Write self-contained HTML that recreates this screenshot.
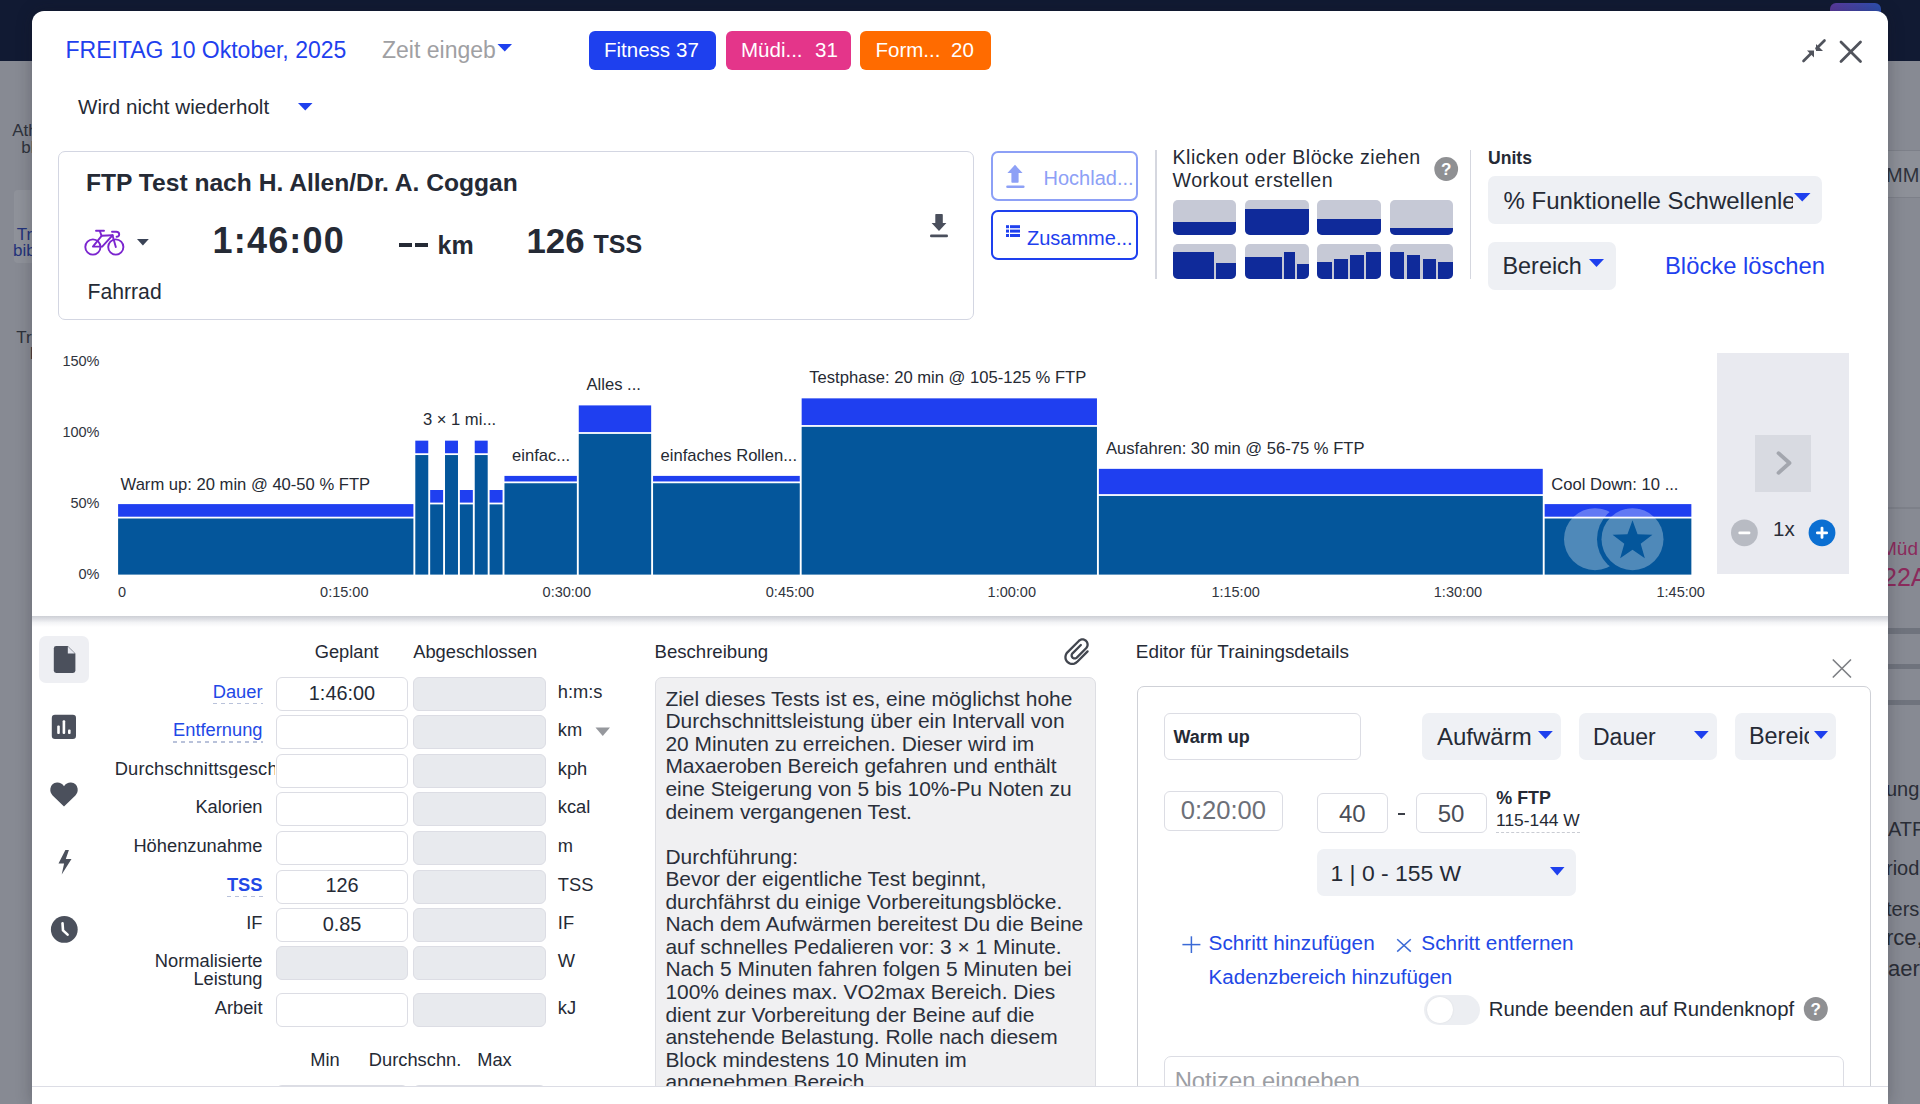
<!DOCTYPE html>
<html><head><meta charset="utf-8">
<style>
*{box-sizing:border-box;margin:0;padding:0}
html,body{width:1920px;height:1104px;overflow:hidden}
body{position:relative;background:#878a93;font-family:"Liberation Sans",sans-serif;color:#252a35}
.t{position:absolute;line-height:1;white-space:nowrap}
.r{position:absolute}
svg{position:absolute;overflow:visible}
</style></head><body>
<div class="r" style="left:0.0px;top:0.0px;width:1920.0px;height:61.0px;background:#111a33"></div><div class="r" style="left:1830.0px;top:3.0px;width:51.0px;height:17.0px;background:linear-gradient(90deg,#5b3a9e,#2c4fb0);border-radius:6px"></div><div class="t" style="left:12.2px;top:122.3px;font-size:17px;color:#2e323b;">Athlete</div><div class="t" style="left:21.2px;top:138.6px;font-size:17px;color:#2e323b;">bl</div><div class="r" style="left:13.6px;top:189.7px;width:46.4px;height:73.3px;background:#8f929a;border-radius:4px"></div><div class="t" style="left:16.8px;top:225.6px;font-size:17px;color:#23337a;">Tr</div><div class="t" style="left:13.0px;top:241.6px;font-size:17px;color:#23337a;">bib</div><div class="t" style="left:16.3px;top:328.6px;font-size:17px;color:#2e323b;">Tr</div><div class="t" style="left:30.0px;top:345.1px;font-size:17px;color:#2e323b;">l</div><div class="r" style="left:1870.0px;top:150.0px;width:50.0px;height:48.0px;background:#8d9098;border-top:1px solid #7d8089;border-bottom:1px solid #7d8089"></div><div class="t" style="left:1886.0px;top:165.1px;font-size:20px;color:#2e323b;">MMM</div><div class="r" style="left:1870.0px;top:507.0px;width:50.0px;height:1.5px;background:#7d8089"></div><div class="t" style="left:1881.0px;top:538.9px;font-size:19px;color:#8b2a5c;">Müd</div><div class="t" style="left:1883.0px;top:564.8px;font-size:25px;color:#8b2a5c;">22A</div><div class="r" style="left:1870.0px;top:628.0px;width:50.0px;height:6.0px;background:#6f737d"></div><div class="r" style="left:1870.0px;top:664.0px;width:50.0px;height:5.0px;background:#6f737d"></div><div class="r" style="left:1870.0px;top:700.0px;width:50.0px;height:5.0px;background:#6f737d"></div><div class="t" style="left:1886.0px;top:779.1px;font-size:20px;color:#2a2d36;">ung</div><div class="t" style="left:1888.0px;top:819.1px;font-size:20px;color:#2a2d36;">ATP</div><div class="t" style="left:1886.0px;top:858.1px;font-size:20px;color:#2a2d36;">riod</div><div class="t" style="left:1886.0px;top:899.1px;font-size:20px;color:#2a2d36;">ters</div><div class="t" style="left:1886.0px;top:927.4px;font-size:22px;color:#2a2d36;">rce,</div><div class="t" style="left:1888.0px;top:958.4px;font-size:22px;color:#2a2d36;">aer</div><div class="r" style="left:32.0px;top:11.0px;width:1856.0px;height:1093.0px;background:#fff;border-radius:12px 12px 0 0;box-shadow:0 0 16px rgba(20,22,30,0.28)"></div><div class="t" style="left:65.5px;top:38.5px;font-size:23px;color:#1e40ee;">FREITAG 10 Oktober, 2025</div><div class="t" style="left:382.0px;top:38.8px;font-size:23px;color:#9fa0a3;">Zeit eingeb</div><svg style="left:497px;top:44px" width="16" height="8"><path d="M0.5 0 L15 0 L7.75 7.6 Z" fill="#1e40ee"/></svg><div class="r" style="left:588.5px;top:31.0px;width:127.0px;height:39.0px;background:#1e40ee;border-radius:6px"></div><div class="t" style="left:604.0px;top:40.1px;font-size:20.5px;color:#fff;">Fitness</div><div class="t" style="left:676.0px;top:40.1px;font-size:20.5px;color:#fff;">37</div><div class="r" style="left:725.5px;top:31.0px;width:125.0px;height:39.0px;background:#e4358a;border-radius:6px"></div><div class="t" style="left:741.0px;top:40.1px;font-size:20.5px;color:#fff;">Müdi...</div><div class="t" style="left:815.0px;top:40.1px;font-size:20.5px;color:#fff;">31</div><div class="r" style="left:860.0px;top:31.0px;width:130.5px;height:39.0px;background:#ff6b00;border-radius:6px"></div><div class="t" style="left:875.5px;top:40.1px;font-size:20.5px;color:#fff;">Form...</div><div class="t" style="left:951.0px;top:40.1px;font-size:20.5px;color:#fff;">20</div><svg style="left:1800px;top:38px" width="28" height="26"><g stroke="#50535c" stroke-width="2.6" stroke-linecap="round" fill="none"><path d="M3.5 23 L11.5 15"/><path d="M24.5 2.5 L16.5 10.5"/></g><path d="M7 12.5 L14 12.5 L14 19.5 Z" fill="#50535c"/><path d="M14.5 6 L14.5 13 L21.5 13 Z" fill="#50535c" transform="translate(1.5 0)"/></svg><svg style="left:1838px;top:39px" width="26" height="26"><g stroke="#50535c" stroke-width="2.8" stroke-linecap="round"><path d="M3 3 L22.5 22.5"/><path d="M22.5 3 L3 22.5"/></g></svg><div class="t" style="left:78.0px;top:97.0px;font-size:20.6px;color:#252a35;">Wird nicht wiederholt</div><svg style="left:298px;top:103px" width="15" height="8"><path d="M0 0 L14.5 0 L7.25 7.5 Z" fill="#1e40ee"/></svg><div class="r" style="left:58.2px;top:151.0px;width:915.8px;height:169.0px;border:1.8px solid #d3d6e2;border-radius:7px;background:#fff"></div><div class="t" style="left:86.0px;top:171.2px;font-size:24.6px;color:#252a35;font-weight:700;">FTP Test nach H. Allen/Dr. A. Coggan</div><svg style="left:84px;top:229px" width="42" height="28" viewBox="0 0 42 28"><g fill="none" stroke="#7b25cf" stroke-width="1.9" stroke-linecap="round" stroke-linejoin="round"><circle cx="8.9" cy="18" r="7.6"/><circle cx="31.8" cy="18" r="7.6"/><path d="M12 1.8 L20 1.8"/><path d="M15.8 2 L17.6 6.8 L28.5 6.3"/><path d="M17.6 6.8 L8.9 17.6 L18.2 17.6 L28.5 6.3"/><path d="M28.5 6.3 L31.8 18"/><path d="M28 2.7 L32.3 2.7 Q35.2 2.7 35.2 5.3 Q35.2 7.8 32.6 7.8"/></g></svg><svg style="left:137px;top:239px" width="12" height="7"><path d="M0 0 L11.8 0 L5.9 6.6 Z" fill="#3a4356"/></svg><div class="t" style="left:212.5px;top:223.3px;font-size:36px;color:#252a35;font-weight:700;letter-spacing:1.2px">1:46:00</div><div class="r" style="left:399.0px;top:243.0px;width:12.5px;height:3.6px;background:#252a35"></div><div class="r" style="left:415.0px;top:243.0px;width:12.5px;height:3.6px;background:#252a35"></div><div class="t" style="left:437.5px;top:232.6px;font-size:25px;color:#252a35;font-weight:700;">km</div><div class="t" style="left:526.5px;top:223.9px;font-size:34.8px;color:#252a35;font-weight:700;">126</div><div class="t" style="left:593.5px;top:232.2px;font-size:25px;color:#252a35;font-weight:700;">TSS</div><div class="t" style="left:87.5px;top:281.3px;font-size:21.2px;color:#252a35;">Fahrrad</div><svg style="left:928px;top:212px" width="22" height="28"><path d="M7.3 2.5 Q7.3 2 8 2 L14 2 Q14.8 2 14.8 2.7 L14.8 11 L18.4 11 L11 18.9 L3.6 11 L7.3 11 Z" fill="#4a4f5c"/><rect x="2" y="22.6" width="18" height="2.6" rx="1.3" fill="#4a4f5c"/></svg><div class="r" style="left:991.0px;top:150.5px;width:147.0px;height:50.5px;border:2px solid #8da0f6;border-radius:7px"></div><svg style="left:1004px;top:163px" width="22" height="27"><path d="M11 1.8 L18.6 10 L14.6 10 L14.6 19 Q14.6 19.7 13.9 19.7 L8.1 19.7 Q7.4 19.7 7.4 19 L7.4 10 L3.4 10 Z" fill="#8da0f6"/><rect x="2.2" y="22.4" width="18.4" height="2.6" rx="1.3" fill="#8da0f6"/></svg><div class="t" style="left:1043.5px;top:168.3px;font-size:20px;color:#8da0f6;">Hochlad...</div><div class="r" style="left:991.0px;top:210.3px;width:147.0px;height:50.2px;border:2px solid #1e40ee;border-radius:7px"></div><svg style="left:1005px;top:224px" width="16" height="14"><g fill="#1e40ee"><rect x="1" y="1.2" width="3" height="3"/><rect x="5" y="1.2" width="10" height="3"/><rect x="1" y="5.6" width="3" height="3"/><rect x="5" y="5.6" width="10" height="3"/><rect x="1" y="10" width="3" height="3"/><rect x="5" y="10" width="10" height="3"/></g></svg><div class="t" style="left:1027.0px;top:227.8px;font-size:20px;color:#1e40ee;">Zusamme...</div><div class="r" style="left:1155.0px;top:150.0px;width:1.5px;height:129.0px;background:#d5d7df"></div><div class="r" style="left:1469.5px;top:150.0px;width:1.5px;height:129.0px;background:#d5d7df"></div><div class="t" style="left:1172.5px;top:147.9px;font-size:19.6px;color:#252a35;letter-spacing:0.5px">Klicken oder Blöcke ziehen</div><div class="t" style="left:1172.5px;top:170.9px;font-size:19.6px;color:#252a35;letter-spacing:0.5px">Workout erstellen</div><svg style="left:1434px;top:157px" width="25" height="25"><circle cx="12.2" cy="12" r="11.9" fill="#8f9093"/><text x="12.2" y="18.2" text-anchor="middle" font-family="Liberation Sans" font-weight="700" font-size="17" fill="#fff">?</text></svg><div class="r" style="left:1172.5px;top:200.3px;width:63.8px;height:34.5px;background:#c6c9d6;border-radius:5px;overflow:hidden"><div class="r" style="left:0.0px;width:63.8px;top:21.7px;bottom:0;background:#0f2a9a"></div></div><div class="r" style="left:1245px;top:200.3px;width:63.8px;height:34.5px;background:#c6c9d6;border-radius:5px;overflow:hidden"><div class="r" style="left:0.0px;width:63.8px;top:8.9px;bottom:0;background:#0f2a9a"></div></div><div class="r" style="left:1317.3px;top:200.3px;width:63.8px;height:34.5px;background:#c6c9d6;border-radius:5px;overflow:hidden"><div class="r" style="left:0.0px;width:63.8px;top:18.6px;bottom:0;background:#0f2a9a"></div></div><div class="r" style="left:1389.7px;top:200.3px;width:63.8px;height:34.5px;background:#c6c9d6;border-radius:5px;overflow:hidden"><div class="r" style="left:0.0px;width:63.8px;top:27.4px;bottom:0;background:#0f2a9a"></div></div><div class="r" style="left:1172.5px;top:244px;width:63.8px;height:34.5px;background:#c6c9d6;border-radius:5px;overflow:hidden"><div class="r" style="left:0.0px;width:41.5px;top:8.2px;bottom:0;background:#0f2a9a"></div><div class="r" style="left:43.5px;width:20.3px;top:19.3px;bottom:0;background:#0f2a9a"></div></div><div class="r" style="left:1245px;top:244px;width:63.8px;height:34.5px;background:#c6c9d6;border-radius:5px;overflow:hidden"><div class="r" style="left:0.0px;width:37.2px;top:13.0px;bottom:0;background:#0f2a9a"></div><div class="r" style="left:39.3px;width:11.0px;top:8.2px;bottom:0;background:#0f2a9a"></div><div class="r" style="left:52.2px;width:11.6px;top:20.0px;bottom:0;background:#0f2a9a"></div></div><div class="r" style="left:1317.3px;top:244px;width:63.8px;height:34.5px;background:#c6c9d6;border-radius:5px;overflow:hidden"><div class="r" style="left:0.0px;width:14.8px;top:18.0px;bottom:0;background:#0f2a9a"></div><div class="r" style="left:17.0px;width:13.7px;top:14.7px;bottom:0;background:#0f2a9a"></div><div class="r" style="left:32.9px;width:13.8px;top:11.4px;bottom:0;background:#0f2a9a"></div><div class="r" style="left:48.8px;width:15.0px;top:8.2px;bottom:0;background:#0f2a9a"></div></div><div class="r" style="left:1389.7px;top:244px;width:63.8px;height:34.5px;background:#c6c9d6;border-radius:5px;overflow:hidden"><div class="r" style="left:0.0px;width:14.8px;top:8.2px;bottom:0;background:#0f2a9a"></div><div class="r" style="left:17.0px;width:13.7px;top:11.4px;bottom:0;background:#0f2a9a"></div><div class="r" style="left:32.9px;width:13.8px;top:14.7px;bottom:0;background:#0f2a9a"></div><div class="r" style="left:48.8px;width:15.0px;top:18.0px;bottom:0;background:#0f2a9a"></div></div><div class="t" style="left:1488.0px;top:149.8px;font-size:17.6px;color:#252a35;font-weight:700;">Units</div><div class="r" style="left:1488.0px;top:176.0px;width:334.0px;height:48.0px;background:#eef0f4;border-radius:7px"></div><div class="t" style="left:1503.5px;top:187px;width:289px;overflow:hidden;font-size:24px;color:#252a35;line-height:1.2">% Funktionelle Schwellenleistung</div><svg style="left:1794px;top:193px" width="17" height="9"><path d="M0 0 L16.5 0 L8.25 8.6 Z" fill="#1e40ee"/></svg><div class="r" style="left:1488.0px;top:242.0px;width:128.0px;height:48.0px;background:#eef0f4;border-radius:7px"></div><div class="t" style="left:1502.5px;top:254.7px;font-size:23.4px;color:#252a35;">Bereich</div><svg style="left:1589px;top:259px" width="16" height="9"><path d="M0 0 L15 0 L7.5 8 Z" fill="#1e40ee"/></svg><div class="t" style="left:1665.0px;top:254.3px;font-size:23.8px;color:#1e40ee;">Blöcke löschen</div><svg style="left:0;top:0" width="1920" height="1104"><rect x="118.10" y="518.50" width="295.30" height="56.10" fill="#04569b"/><rect x="118.10" y="504.10" width="295.30" height="12.60" fill="#1f3ff0"/><rect x="415.30" y="455.05" width="12.96" height="119.55" fill="#04569b"/><rect x="415.30" y="440.65" width="12.96" height="12.60" fill="#1f3ff0"/><rect x="430.16" y="504.40" width="12.96" height="70.20" fill="#04569b"/><rect x="430.16" y="490.00" width="12.96" height="12.60" fill="#1f3ff0"/><rect x="445.02" y="455.05" width="12.96" height="119.55" fill="#04569b"/><rect x="445.02" y="440.65" width="12.96" height="12.60" fill="#1f3ff0"/><rect x="459.88" y="504.40" width="12.96" height="70.20" fill="#04569b"/><rect x="459.88" y="490.00" width="12.96" height="12.60" fill="#1f3ff0"/><rect x="474.74" y="455.05" width="12.96" height="119.55" fill="#04569b"/><rect x="474.74" y="440.65" width="12.96" height="12.60" fill="#1f3ff0"/><rect x="489.60" y="504.40" width="12.96" height="70.20" fill="#04569b"/><rect x="489.60" y="490.00" width="12.96" height="12.60" fill="#1f3ff0"/><rect x="504.46" y="483.25" width="72.40" height="91.35" fill="#04569b"/><rect x="504.46" y="475.90" width="72.40" height="5.55" fill="#1f3ff0"/><rect x="578.76" y="433.90" width="72.40" height="140.70" fill="#04569b"/><rect x="578.76" y="405.40" width="72.40" height="26.70" fill="#1f3ff0"/><rect x="653.06" y="483.25" width="146.70" height="91.35" fill="#04569b"/><rect x="653.06" y="475.90" width="146.70" height="5.55" fill="#1f3ff0"/><rect x="801.66" y="426.85" width="295.30" height="147.75" fill="#04569b"/><rect x="801.66" y="398.35" width="295.30" height="26.70" fill="#1f3ff0"/><rect x="1098.86" y="495.94" width="443.90" height="78.66" fill="#04569b"/><rect x="1098.86" y="468.85" width="443.90" height="25.29" fill="#1f3ff0"/><rect x="1544.66" y="518.50" width="146.70" height="56.10" fill="#04569b"/><rect x="1544.66" y="504.10" width="146.70" height="12.60" fill="#1f3ff0"/><defs><mask id="m1"><rect x="1500" y="450" width="250" height="150" fill="#fff"/><circle cx="1632.5" cy="539.2" r="35.5" fill="#000"/></mask><mask id="m2"><rect x="1500" y="450" width="250" height="150" fill="#fff"/><polygon points="1632.50,520.20 1637.55,534.24 1652.47,534.71 1640.68,543.86 1644.84,558.19 1632.50,549.80 1620.16,558.19 1624.32,543.86 1612.53,534.71 1627.45,534.24" fill="#000"/></mask><clipPath id="c1"><rect x="1544.2" y="500" width="146.6" height="74.2"/></clipPath></defs><g clip-path="url(#c1)" fill="#fff" fill-opacity="0.3"><circle cx="1595" cy="539.2" r="31" mask="url(#m1)"/><circle cx="1632.5" cy="539.2" r="31" mask="url(#m2)"/></g></svg><div class="t" style="right:1820.5px;top:353.6px;font-size:14.5px;color:#30343d;text-align:right;">150%</div><div class="t" style="right:1820.5px;top:424.6px;font-size:14.5px;color:#30343d;text-align:right;">100%</div><div class="t" style="right:1820.5px;top:495.7px;font-size:14.5px;color:#30343d;text-align:right;">50%</div><div class="t" style="right:1820.5px;top:566.7px;font-size:14.5px;color:#30343d;text-align:right;">0%</div><div class="t" style="left:118.0px;top:584.7px;font-size:14.5px;color:#30343d;">0</div><div class="t" style="left:44.3px;width:600px;top:584.7px;font-size:14.5px;color:#30343d;text-align:center;">0:15:00</div><div class="t" style="left:266.8px;width:600px;top:584.7px;font-size:14.5px;color:#30343d;text-align:center;">0:30:00</div><div class="t" style="left:490.0px;width:600px;top:584.7px;font-size:14.5px;color:#30343d;text-align:center;">0:45:00</div><div class="t" style="left:711.8px;width:600px;top:584.7px;font-size:14.5px;color:#30343d;text-align:center;">1:00:00</div><div class="t" style="left:935.6px;width:600px;top:584.7px;font-size:14.5px;color:#30343d;text-align:center;">1:15:00</div><div class="t" style="left:1158.0px;width:600px;top:584.7px;font-size:14.5px;color:#30343d;text-align:center;">1:30:00</div><div class="t" style="left:1380.7px;width:600px;top:584.7px;font-size:14.5px;color:#30343d;text-align:center;">1:45:00</div><div class="t" style="left:120.6px;top:476.8px;font-size:16.6px;color:#262a33;">Warm up: 20 min @ 40-50 % FTP</div><div class="t" style="left:422.9px;top:412.1px;font-size:16.6px;color:#262a33;">3 × 1 mi...</div><div class="t" style="left:512.0px;top:447.9px;font-size:16.6px;color:#262a33;">einfac...</div><div class="t" style="left:586.5px;top:376.9px;font-size:16.6px;color:#262a33;">Alles ...</div><div class="t" style="left:660.5px;top:447.9px;font-size:16.6px;color:#262a33;">einfaches Rollen...</div><div class="t" style="left:809.3px;top:370.1px;font-size:16.6px;color:#262a33;">Testphase: 20 min @ 105-125 % FTP</div><div class="t" style="left:1106.0px;top:440.7px;font-size:16.6px;color:#262a33;">Ausfahren: 30 min @ 56-75 % FTP</div><div class="t" style="left:1551.2px;top:476.9px;font-size:16.6px;color:#262a33;">Cool Down: 10 ...</div><div class="r" style="left:1717.4px;top:352.7px;width:132.1px;height:221.5px;background:#e9eaf0"></div><div class="r" style="left:1755.4px;top:435.4px;width:56.1px;height:56.5px;background:#d8dae1"></div><svg style="left:1772px;top:450px" width="24" height="28"><path d="M6.5 3.2 L17.5 13 L6.5 22.8" fill="none" stroke="#a3a6ae" stroke-width="3.8" stroke-linecap="round" stroke-linejoin="round"/></svg><svg style="left:1730px;top:519px" width="28" height="28"><circle cx="14.4" cy="13.8" r="13.4" fill="#b8bbc3"/><rect x="8.4" y="12.4" width="12" height="2.8" rx="1.2" fill="#fff"/></svg><div class="t" style="left:1773.0px;top:518.6px;font-size:20.5px;color:#2a2e38;">1x</div><svg style="left:1808px;top:519px" width="28" height="28"><circle cx="14" cy="13.8" r="13.4" fill="#0b6fd2"/><rect x="8" y="12.4" width="12" height="2.8" rx="1.2" fill="#fff"/><rect x="12.6" y="7.8" width="2.8" height="12" rx="1.2" fill="#fff"/></svg><div class="r" style="left:32.0px;top:615.5px;width:1856.0px;height:11.5px;background:linear-gradient(#cdcfd5,#dfe0e5 30%,#f3f4f6 60%,#fff)"></div><div class="r" style="left:39.4px;top:635.9px;width:49.6px;height:47.3px;background:#eeeff3;border-radius:7px"></div><svg style="left:52px;top:644px" width="26" height="32"><path d="M4.2 2 L15.8 2 L23.4 9.6 L23.4 26.6 Q23.4 29 21 29 L4.2 29 Q1.8 29 1.8 26.6 L1.8 4.4 Q1.8 2 4.2 2 Z" fill="#4b505c"/><path d="M15.8 2.5 L15.8 9.6 L22.9 9.6 Z" fill="#e6e8f0"/></svg><svg style="left:51px;top:714px" width="26" height="26"><rect x="0.8" y="0.8" width="24.2" height="24.2" rx="3.2" fill="#4b505c"/><rect x="6.2" y="11.5" width="2.6" height="8.6" rx="1" fill="#fff"/><rect x="11.6" y="6.2" width="2.6" height="13.9" rx="1" fill="#fff"/><rect x="17" y="15.5" width="2.6" height="4.6" rx="1" fill="#fff"/></svg><svg style="left:49px;top:781px" width="30" height="27"><path d="M15 25.6 L3.6 14.4 Q0.8 11.6 1.4 7.6 Q2.4 2 8 1.6 Q12.4 1.4 15 5.2 Q17.6 1.4 22 1.6 Q27.6 2 28.6 7.6 Q29.2 11.6 26.4 14.4 Z" fill="#4b505c"/></svg><svg style="left:56px;top:849px" width="17" height="27"><path d="M8.9 1 L2 14.6 L7.6 14.6 L5.2 25.6 L15 10 L9.3 10 L12.4 1 Z" fill="#4b505c" transform="translate(0.5 0)"/></svg><svg style="left:50px;top:915px" width="29" height="29"><circle cx="14.3" cy="14.4" r="13.4" fill="#4b505c"/><path d="M12.5 8.2 L13 15.4 L17.6 19.6" stroke="#fff" stroke-width="2.6" stroke-linecap="round" stroke-linejoin="round" fill="none"/></svg><div class="t" style="left:46.7px;width:600px;top:643.1px;font-size:18.3px;color:#252a35;text-align:center;">Geplant</div><div class="t" style="left:175.2px;width:600px;top:643.1px;font-size:18.3px;color:#252a35;text-align:center;">Abgeschlossen</div><div class="r" style="left:275.8px;top:676.7px;width:132.7px;height:34.0px;border:1.6px solid #dcdde4;border-radius:6px;background:#fff"></div><div class="r" style="left:412.7px;top:676.7px;width:133.6px;height:34.0px;border:1.6px solid #dcdde4;border-radius:6px;background:#e8eaee"></div><div class="t" style="right:1657.5px;top:682.6px;font-size:18.3px;color:#2248e6;text-align:right;background:linear-gradient(90deg,#b9c2da 55%,transparent 55%) 0 100%/8px 1.8px repeat-x;padding-bottom:3.5px;line-height:1">Dauer</div><div class="t" style="left:557.8px;top:682.6px;font-size:18.3px;color:#252a35;">h:m:s</div><div class="t" style="left:42.0px;width:600px;top:683.5px;font-size:19.9px;color:#252a35;text-align:center;">1:46:00</div><div class="r" style="left:275.8px;top:715.2px;width:132.7px;height:34.0px;border:1.6px solid #dcdde4;border-radius:6px;background:#fff"></div><div class="r" style="left:412.7px;top:715.2px;width:133.6px;height:34.0px;border:1.6px solid #dcdde4;border-radius:6px;background:#e8eaee"></div><div class="t" style="right:1657.5px;top:721.1px;font-size:18.3px;color:#2248e6;text-align:right;background:linear-gradient(90deg,#b9c2da 55%,transparent 55%) 0 100%/8px 1.8px repeat-x;padding-bottom:3.5px;line-height:1">Entfernung</div><div class="t" style="left:557.8px;top:721.1px;font-size:18.3px;color:#252a35;">km</div><div class="r" style="left:275.8px;top:753.8px;width:132.7px;height:34.0px;border:1.6px solid #dcdde4;border-radius:6px;background:#fff"></div><div class="r" style="left:412.7px;top:753.8px;width:133.6px;height:34.0px;border:1.6px solid #dcdde4;border-radius:6px;background:#e8eaee"></div><div class="t" style="left:114.7px;top:759.7px;width:160.5px;overflow:hidden;font-size:18.3px;letter-spacing:0.2px;color:#252a35">Durchschnittsgeschwindigkeit</div><div class="t" style="left:557.8px;top:759.7px;font-size:18.3px;color:#252a35;">kph</div><div class="r" style="left:275.8px;top:792.4px;width:132.7px;height:34.0px;border:1.6px solid #dcdde4;border-radius:6px;background:#fff"></div><div class="r" style="left:412.7px;top:792.4px;width:133.6px;height:34.0px;border:1.6px solid #dcdde4;border-radius:6px;background:#e8eaee"></div><div class="t" style="right:1657.5px;top:798.3px;font-size:18.3px;color:#252a35;text-align:right;">Kalorien</div><div class="t" style="left:557.8px;top:798.3px;font-size:18.3px;color:#252a35;">kcal</div><div class="r" style="left:275.8px;top:831.0px;width:132.7px;height:34.0px;border:1.6px solid #dcdde4;border-radius:6px;background:#fff"></div><div class="r" style="left:412.7px;top:831.0px;width:133.6px;height:34.0px;border:1.6px solid #dcdde4;border-radius:6px;background:#e8eaee"></div><div class="t" style="right:1657.5px;top:836.9px;font-size:18.3px;color:#252a35;text-align:right;">Höhenzunahme</div><div class="t" style="left:557.8px;top:836.9px;font-size:18.3px;color:#252a35;">m</div><div class="r" style="left:275.8px;top:869.6px;width:132.7px;height:34.0px;border:1.6px solid #dcdde4;border-radius:6px;background:#fff"></div><div class="r" style="left:412.7px;top:869.6px;width:133.6px;height:34.0px;border:1.6px solid #dcdde4;border-radius:6px;background:#e8eaee"></div><div class="t" style="right:1657.5px;top:875.5px;font-size:18.3px;color:#2248e6;font-weight:700;text-align:right;background:linear-gradient(90deg,#b9c2da 55%,transparent 55%) 0 100%/8px 1.8px repeat-x;padding-bottom:3.5px;line-height:1">TSS</div><div class="t" style="left:557.8px;top:875.5px;font-size:18.3px;color:#252a35;">TSS</div><div class="t" style="left:42.0px;width:600px;top:876.4px;font-size:19.9px;color:#252a35;text-align:center;">126</div><div class="r" style="left:275.8px;top:908.0px;width:132.7px;height:34.0px;border:1.6px solid #dcdde4;border-radius:6px;background:#fff"></div><div class="r" style="left:412.7px;top:908.0px;width:133.6px;height:34.0px;border:1.6px solid #dcdde4;border-radius:6px;background:#e8eaee"></div><div class="t" style="right:1657.5px;top:913.9px;font-size:18.3px;color:#252a35;text-align:right;">IF</div><div class="t" style="left:557.8px;top:913.9px;font-size:18.3px;color:#252a35;">IF</div><div class="t" style="left:42.0px;width:600px;top:914.8px;font-size:19.9px;color:#252a35;text-align:center;">0.85</div><div class="r" style="left:275.8px;top:946.4px;width:132.7px;height:34.0px;border:1.6px solid #dcdde4;border-radius:6px;background:#e8eaee"></div><div class="r" style="left:412.7px;top:946.4px;width:133.6px;height:34.0px;border:1.6px solid #dcdde4;border-radius:6px;background:#e8eaee"></div><div class="t" style="right:1657.5px;top:952.3px;font-size:18.3px;color:#252a35;text-align:right;">Normalisierte</div><div class="t" style="right:1657.5px;top:970.3px;font-size:18.3px;color:#252a35;text-align:right;">Leistung</div><div class="t" style="left:557.8px;top:952.3px;font-size:18.3px;color:#252a35;">W</div><div class="r" style="left:275.8px;top:993.4px;width:132.7px;height:34.0px;border:1.6px solid #dcdde4;border-radius:6px;background:#fff"></div><div class="r" style="left:412.7px;top:993.4px;width:133.6px;height:34.0px;border:1.6px solid #dcdde4;border-radius:6px;background:#e8eaee"></div><div class="t" style="right:1657.5px;top:999.3px;font-size:18.3px;color:#252a35;text-align:right;">Arbeit</div><div class="t" style="left:557.8px;top:999.3px;font-size:18.3px;color:#252a35;">kJ</div><svg style="left:595px;top:726.5px" width="16" height="10"><path d="M0.5 0.5 L15 0.5 L7.75 9 Z" fill="#96989d"/></svg><div class="t" style="left:24.9px;width:600px;top:1051.3px;font-size:18.3px;color:#252a35;text-align:center;">Min</div><div class="t" style="left:115.1px;width:600px;top:1051.3px;font-size:18.3px;color:#252a35;text-align:center;">Durchschn.</div><div class="t" style="left:194.5px;width:600px;top:1051.3px;font-size:18.3px;color:#252a35;text-align:center;">Max</div><div class="r" style="left:275.8px;top:1085.0px;width:132.7px;height:19.0px;border:1.6px solid #dcdde4;border-radius:6px"></div><div class="r" style="left:412.7px;top:1085.0px;width:133.6px;height:19.0px;border:1.6px solid #dcdde4;border-radius:6px"></div><div class="t" style="left:654.5px;top:642.9px;font-size:18.6px;color:#252a35;">Beschreibung</div><svg style="left:0;top:0" width="1920" height="1104"><path d="M1087.58 651.41 L1077.04 661.95 L1075.85 662.90 L1074.48 663.56 L1072.99 663.90 L1071.47 663.90 L1069.99 663.56 L1068.61 662.90 L1067.42 661.95 L1066.47 660.76 L1065.81 659.39 L1065.48 657.90 L1065.48 656.38 L1065.81 654.90 L1066.47 653.52 L1067.42 652.33 L1078.81 640.95 L1079.71 640.23 L1080.75 639.73 L1081.87 639.47 L1083.03 639.47 L1084.15 639.73 L1085.19 640.23 L1086.09 640.95 L1086.81 641.85 L1087.31 642.89 L1087.57 644.01 L1087.57 645.17 L1087.31 646.29 L1086.81 647.33 L1086.09 648.23 L1076.76 657.57 L1076.23 657.98 L1075.63 658.28 L1074.97 658.43 L1074.30 658.43 L1073.65 658.28 L1073.04 657.98 L1072.52 657.57 L1072.10 657.04 L1071.80 656.43 L1071.66 655.78 L1071.66 655.11 L1071.80 654.45 L1072.10 653.85 L1072.52 653.32 L1080.86 644.98" fill="none" stroke="#42464f" stroke-width="2.3" stroke-linecap="round" stroke-linejoin="round"/></svg><div class="r" style="left:655.3px;top:677px;width:441px;height:440px;background:#f0f0f2;border:1.6px solid #dddee3;border-radius:7px"></div><div class="t" style="left:665.4px;top:688.8px;font-size:20.95px;color:#2a2f3a;">Ziel dieses Tests ist es, eine möglichst hohe</div><div class="t" style="left:665.4px;top:711.3px;font-size:20.95px;color:#2a2f3a;">Durchschnittsleistung über ein Intervall von</div><div class="t" style="left:665.4px;top:733.9px;font-size:20.95px;color:#2a2f3a;">20 Minuten zu erreichen. Dieser wird im</div><div class="t" style="left:665.4px;top:756.4px;font-size:20.95px;color:#2a2f3a;">Maxaeroben Bereich gefahren und enthält</div><div class="t" style="left:665.4px;top:779.0px;font-size:20.95px;color:#2a2f3a;">eine Steigerung von 5 bis 10%-Pu Noten zu</div><div class="t" style="left:665.4px;top:801.5px;font-size:20.95px;color:#2a2f3a;">deinem vergangenen Test.</div><div class="t" style="left:665.4px;top:846.6px;font-size:20.95px;color:#2a2f3a;">Durchführung:</div><div class="t" style="left:665.4px;top:869.2px;font-size:20.95px;color:#2a2f3a;">Bevor der eigentliche Test beginnt,</div><div class="t" style="left:665.4px;top:891.7px;font-size:20.95px;color:#2a2f3a;">durchfährst du einige Vorbereitungsblöcke.</div><div class="t" style="left:665.4px;top:914.3px;font-size:20.95px;color:#2a2f3a;">Nach dem Aufwärmen bereitest Du die Beine</div><div class="t" style="left:665.4px;top:936.8px;font-size:20.95px;color:#2a2f3a;">auf schnelles Pedalieren vor: 3 × 1 Minute.</div><div class="t" style="left:665.4px;top:959.4px;font-size:20.95px;color:#2a2f3a;">Nach 5 Minuten fahren folgen 5 Minuten bei</div><div class="t" style="left:665.4px;top:981.9px;font-size:20.95px;color:#2a2f3a;">100% deines max. VO2max Bereich. Dies</div><div class="t" style="left:665.4px;top:1004.5px;font-size:20.95px;color:#2a2f3a;">dient zur Vorbereitung der Beine auf die</div><div class="t" style="left:665.4px;top:1027.0px;font-size:20.95px;color:#2a2f3a;">anstehende Belastung. Rolle nach diesem</div><div class="t" style="left:665.4px;top:1049.6px;font-size:20.95px;color:#2a2f3a;">Block mindestens 10 Minuten im</div><div class="t" style="left:665.4px;top:1072.1px;font-size:20.95px;color:#2a2f3a;">angenehmen Bereich.</div><div class="t" style="left:1135.8px;top:642.6px;font-size:18.9px;color:#252a35;">Editor für Trainingsdetails</div><svg style="left:1831px;top:658px" width="22" height="22"><g stroke="#7e8085" stroke-width="1.7" stroke-linecap="round"><path d="M2.3 2 L19.5 19"/><path d="M19.5 2 L2.3 19"/></g></svg><div class="r" style="left:1136.7px;top:686.0px;width:734.6px;height:464.0px;border:1.6px solid #cfd1d7;border-radius:7px"></div><div class="r" style="left:1163.5px;top:713.2px;width:197.6px;height:47.0px;border:1.6px solid #dcdde4;border-radius:6px;background:#fff"></div><div class="t" style="left:1173.5px;top:728.0px;font-size:18px;color:#252a35;font-weight:700;">Warm up</div><div class="r" style="left:1421.5px;top:713.2px;width:139.5px;height:47.0px;background:#eff1f5;border-radius:7px"></div><div class="t" style="left:1437.0px;top:724.7px;font-size:24px;color:#252a35;">Aufwärm</div><svg style="left:1537.7px;top:731px" width="16" height="9"><path d="M0 0 L14.8 0 L7.4 8 Z" fill="#1e40ee"/></svg><div class="r" style="left:1578.6px;top:713.2px;width:138.2px;height:47.0px;background:#eff1f5;border-radius:7px"></div><div class="t" style="left:1593.0px;top:725.5px;font-size:23px;color:#252a35;">Dauer</div><svg style="left:1694px;top:731px" width="16" height="9"><path d="M0 0 L14.7 0 L7.4 8 Z" fill="#1e40ee"/></svg><div class="r" style="left:1734.5px;top:713.2px;width:101.0px;height:47.0px;background:#eff1f5;border-radius:7px"></div><div class="t" style="left:1749px;top:725.2px;width:60px;overflow:hidden;font-size:23.4px;color:#252a35">Bereich</div><svg style="left:1813.5px;top:731px" width="15" height="9"><path d="M0 0 L14.1 0 L7.0 8 Z" fill="#1e40ee"/></svg><div class="r" style="left:1163.5px;top:790.6px;width:119.5px;height:40.3px;border:1.6px solid #dcdde4;border-radius:6px;background:#fff"></div><div class="t" style="left:1180.7px;top:798.4px;font-size:25.6px;color:#6d7078;">0:20:00</div><div class="r" style="left:1316.6px;top:792.5px;width:71.4px;height:40.8px;border:1.6px solid #dcdde4;border-radius:6px;background:#fff"></div><div class="t" style="left:1052.3px;width:600px;top:801.5px;font-size:24px;color:#4a4e58;text-align:center;">40</div><div class="r" style="left:1397.5px;top:812.6px;width:7.2px;height:2.6px;background:#3b3f48"></div><div class="r" style="left:1415.5px;top:792.5px;width:71.2px;height:40.8px;border:1.6px solid #dcdde4;border-radius:6px;background:#fff"></div><div class="t" style="left:1151.1px;width:600px;top:801.5px;font-size:24px;color:#4a4e58;text-align:center;">50</div><div class="t" style="left:1496.3px;top:789.8px;font-size:17.9px;color:#252a35;font-weight:700;">% FTP</div><div class="t" style="left:1496.0px;top:811.9px;font-size:17.4px;color:#252a35;border-bottom:1.4px dashed #c9ccd3;padding-bottom:3px;line-height:1">115-144 W</div><div class="r" style="left:1316.6px;top:849.3px;width:259.4px;height:47.2px;background:#eff1f5;border-radius:7px"></div><div class="t" style="left:1330.5px;top:861.6px;font-size:22.9px;color:#252a35;">1 | 0 - 155 W</div><svg style="left:1550px;top:867px" width="16" height="10"><path d="M0 0 L14.5 0 L7.25 8.4 Z" fill="#1e40ee"/></svg><svg style="left:1181px;top:934.8px" width="21" height="20"><g stroke="#3b6ad6" stroke-width="1.5"><path d="M10.4 1.3 L10.4 18"/><path d="M1.4 9.6 L19.4 9.6"/></g></svg><div class="t" style="left:1208.6px;top:933.2px;font-size:20.76px;color:#2248e6;">Schritt hinzufügen</div><svg style="left:1395px;top:936.5px" width="18" height="17"><g stroke="#3b6ad6" stroke-width="1.5"><path d="M2.2 2.3 L15.8 14.6"/><path d="M15.8 2.3 L2.2 14.6"/></g></svg><div class="t" style="left:1421.3px;top:933.2px;font-size:20.76px;color:#2248e6;">Schritt entfernen</div><div class="t" style="left:1208.6px;top:967.0px;font-size:20.58px;color:#2248e6;">Kadenzbereich hinzufügen</div><div class="r" style="left:1424.4px;top:995.1px;width:55.5px;height:29.7px;background:#eceef2;border-radius:15px"></div><div class="r" style="left:1426.5px;top:997px;width:26px;height:26px;border-radius:50%;background:#fff;box-shadow:0 0 2px rgba(0,0,0,0.08)"></div><div class="t" style="left:1488.7px;top:999.1px;font-size:20.35px;color:#252a35;">Runde beenden auf Rundenknopf</div><svg style="left:1803px;top:996px" width="26" height="26"><circle cx="12.8" cy="12.9" r="12" fill="#8f9093"/><text x="12.8" y="19" text-anchor="middle" font-family="Liberation Sans" font-weight="700" font-size="17" fill="#fff">?</text></svg><div class="r" style="left:1163.9px;top:1055.6px;width:680.1px;height:94.4px;border:1.6px solid #dcdde4;border-radius:7px;background:#fff"></div><div class="t" style="left:1174.7px;top:1068.8px;font-size:23.8px;color:#9c9ea4;">Notizen eingeben</div><div class="r" style="left:32.0px;top:1086.2px;width:1856.0px;height:17.8px;background:#fff;border-top:1.5px solid #dcdde5"></div>
</body></html>
